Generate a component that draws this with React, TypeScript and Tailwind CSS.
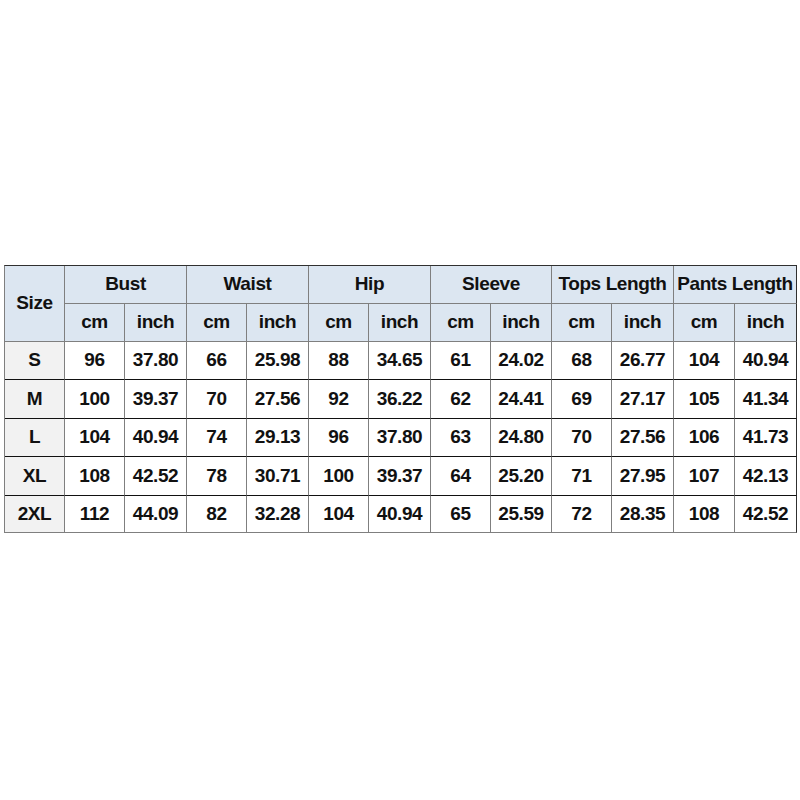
import React from "react";

const groups = ["Bust", "Waist", "Hip", "Sleeve", "Tops Length", "Pants Length"];
const rows: [string, string[]][] = [
  ["S", ["96", "37.80", "66", "25.98", "88", "34.65", "61", "24.02", "68", "26.77", "104", "40.94"]],
  ["M", ["100", "39.37", "70", "27.56", "92", "36.22", "62", "24.41", "69", "27.17", "105", "41.34"]],
  ["L", ["104", "40.94", "74", "29.13", "96", "37.80", "63", "24.80", "70", "27.56", "106", "41.73"]],
  ["XL", ["108", "42.52", "78", "30.71", "100", "39.37", "64", "25.20", "71", "27.95", "107", "42.13"]],
  ["2XL", ["112", "44.09", "82", "32.28", "104", "40.94", "65", "25.59", "72", "28.35", "108", "42.52"]],
];

export default function App() {
  return (
    <div className="w-[800px] h-[800px] bg-white pt-[265px] pl-[4px]" style={{ fontFamily: '"Liberation Sans", Arial, sans-serif' }}>
      <div
        className="grid w-[793px] border-l border-t border-l-[#7f7f7f] border-t-[#303030] text-[19px] tracking-[-0.4px] font-bold text-[#111]"
        style={{
          gridTemplateColumns: "60px 60px 62px 60px 62px 60px 62px 60px 61px 60px 62px 61px 62px",
          gridTemplateRows: "38px 38px 38px 39px 38px 39px 37px",
        }}
      >
        <div className="row-span-2 flex items-center justify-center bg-[#dce6f1] border-r border-b border-[#7f7f7f]">Size</div>
        {groups.map((g, i) => (
          <div
            key={g}
            className={`col-span-2 flex items-center justify-center whitespace-nowrap bg-[#dce6f1] border-b border-[#7f7f7f] ${i === 5 ? "border-r border-r-[#303030]" : "border-r"}`}
          >
            {g}
          </div>
        ))}
        {groups.map((g, i) => (
          <React.Fragment key={g + "u"}>
            <div className="flex items-center justify-center bg-[#dce6f1] border-r border-b border-[#7f7f7f]">cm</div>
            <div className={`flex items-center justify-center bg-[#dce6f1] border-r border-b border-[#7f7f7f] ${i === 5 ? "border-r-[#303030]" : ""}`}>inch</div>
          </React.Fragment>
        ))}
        {rows.map(([size, vals], r) => (
          <React.Fragment key={size}>
            <div className={`flex items-center justify-center bg-[#f2f2f2] border-r border-r-[#7f7f7f] border-b ${r === 4 ? "border-b-[#7f7f7f]" : "border-b-[#111]"}`}>{size}</div>
            {vals.map((v, c) => (
              <div
                key={c}
                className={`flex items-center justify-center bg-white border-r border-b ${c === 11 ? "border-r-[#303030]" : "border-r-[#7f7f7f]"} ${r === 4 ? "border-b-[#7f7f7f]" : "border-b-[#111]"}`}
              >
                {v}
              </div>
            ))}
          </React.Fragment>
        ))}
      </div>
    </div>
  );
}
